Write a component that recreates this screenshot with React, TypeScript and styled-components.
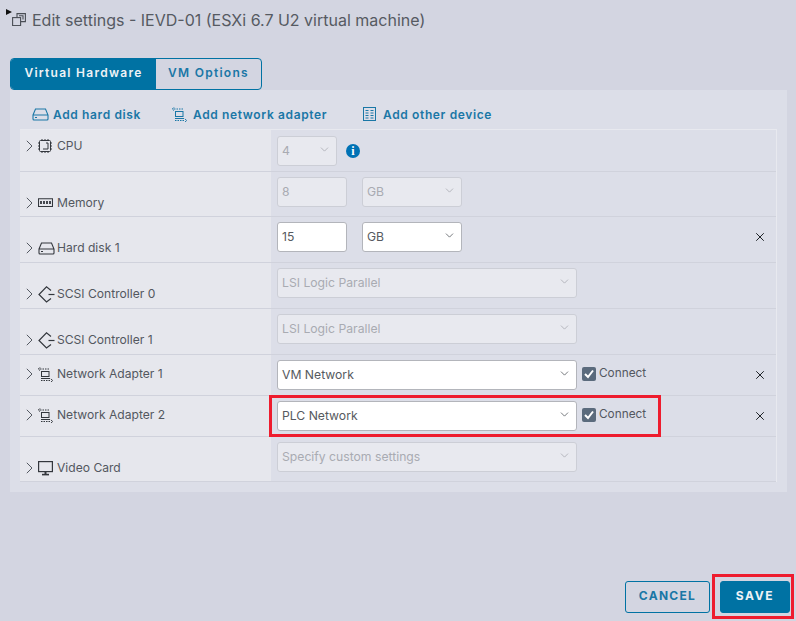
import React from "react";
import styled, { createGlobalStyle } from "styled-components";
import { ChevronDown, X } from "lucide-react";

const GlobalStyle = createGlobalStyle`
  html, body {
    margin: 0;
    padding: 0;
    background: #d3d5e1;
    overflow: hidden;
  }
  * {
    box-sizing: border-box;
  }
`;

const Dialog = styled.div`
  width: 796px;
  height: 621px;
  padding: 0 10px;
  display: flex;
  flex-direction: column;
  font-family: Inter, "Noto Sans", sans-serif;
  color: #484d55;
  position: relative;
`;

const Header = styled.div`
  height: 58px;
  padding: 10px 0 0 2px;
  display: flex;
  align-items: flex-start;
  gap: 6px;
  position: relative;
`;

const Caret = styled.div`
  position: absolute;
  left: -4px;
  top: 9px;
  border-left: 6px solid #111;
  border-top: 3px solid transparent;
  border-bottom: 3px solid transparent;
`;

const HeaderIcon = styled.span`
  display: flex;
  margin-top: 3px;
`;

const Title = styled.h1`
  margin: 0;
  font-size: 16px;
  font-weight: 400;
  line-height: 20px;
  color: #565a62;
`;

const Tabs = styled.div`
  display: flex;
  width: 252px;
  height: 32px;
  border: 1px solid #0072a3;
  border-radius: 4px;
  overflow: hidden;
`;

const Tab = styled.div<{ $active?: boolean }>`
  display: flex;
  align-items: center;
  justify-content: center;
  width: ${(p) => (p.$active ? "145px" : "105px")};
  padding-bottom: 3px;
  background: ${(p) => (p.$active ? "#0072a3" : "transparent")};
  color: ${(p) => (p.$active ? "#eef2f6" : "#1a77a6")};
  font-size: 12px;
  font-weight: 600;
  letter-spacing: 1.27px;
`;

const Panel = styled.div`
  width: 777px;
  height: 402px;
  flex-shrink: 0;
  background: #dcdee8;
  padding: 0 10px;
`;

const AddBar = styled.div`
  height: 40px;
  display: flex;
  align-items: center;
  padding-left: 12px;
  padding-top: 8px;
`;

const AddAction = styled.div<{ $width: number; $gap: number }>`
  display: flex;
  align-items: center;
  gap: ${(p) => p.$gap}px;
  width: ${(p) => p.$width}px;
  color: #1a77a6;
  font-size: 12px;
  font-weight: 600;
  letter-spacing: 0.63px;
`;

const Rows = styled.div`
  display: flex;
  flex-direction: column;
  border-right: 1px solid #e8e9ef;
  box-shadow: 0 -1px 0 #e8e9ef;
`;

const Row = styled.div<{ $height: number }>`
  display: flex;
  height: ${(p) => p.$height}px;
  border-bottom: 1px solid #d0d2dc;
`;

const LabelCell = styled.div<{ $top: number }>`
  width: 251px;
  height: 100%;
  background: #e6e7ed;
  display: flex;
  align-items: flex-start;
  padding: ${(p) => p.$top}px 0 0 6px;
  font-size: 12.1px;
  line-height: 16px;
  color: #53575f;
`;

const Expander = styled.span`
  width: 7px;
  height: 16px;
  margin-right: 5px;
  display: flex;
  align-items: center;
  color: #555a62;
`;

const RowIcon = styled.span`
  width: 19px;
  height: 16px;
  display: flex;
  align-items: center;
  justify-content: flex-start;
  color: #33373d;
`;

const ValueCell = styled.div<{ $top: number }>`
  flex: 1;
  display: flex;
  align-items: flex-start;
  gap: 5px;
  padding: ${(p) => p.$top}px 0 0 6px;
`;

const Field = styled.div<{ $width: number; $disabled?: boolean; $gap?: number }>`
  width: ${(p) => p.$width}px;
  height: 30px;
  margin-right: ${(p) => p.$gap ?? 0}px;
  padding: 0 5px 2px 4px;
  display: flex;
  align-items: center;
  justify-content: space-between;
  background: ${(p) => (p.$disabled ? "#e8e9ef" : "#ffffff")};
  border: 1px solid ${(p) => (p.$disabled ? "#ccced6" : "#b3b5bb")};
  border-radius: 3px;
  font-size: 12.2px;
  color: ${(p) => (p.$disabled ? "#a9abb2" : "#565a60")};

  svg {
    margin-top: -2px;
  }
`;

const Check = styled.span`
  width: 14px;
  height: 14px;
  margin-top: 7px;
  border-radius: 2px;
  background: #5b6b7d;
  display: flex;
  align-items: center;
  justify-content: center;
`;

const CheckLabel = styled.span`
  font-size: 11.8px;
  line-height: 16px;
  margin: 5px 0 0 -2px;
  color: #53575f;
`;

const InfoDot = styled.span`
  width: 14px;
  height: 14px;
  margin: 8px 0 0 4px;
  border-radius: 50%;
  background: #0072b5;
  color: #fff;
  font-family: "Liberation Serif", serif;
  font-size: 12px;
  font-weight: 700;
  line-height: 14px;
  text-align: center;
`;

const Remove = styled.span`
  margin: 8px 9px 0 auto;
  display: flex;
  color: #1c2025;
`;

const Highlight = styled.div`
  position: absolute;
  left: 269px;
  top: 395px;
  width: 392px;
  height: 42px;
  border: 3px solid #ee1c2e;
  pointer-events: none;
`;

const Footer = styled.div`
  flex: 1;
  display: flex;
  justify-content: flex-end;
  align-items: flex-end;
  gap: 10px;
  padding: 0 0 8px 0;
  margin-right: -4px;
`;

const Button = styled.div<{ $primary?: boolean }>`
  width: ${(p) => (p.$primary ? "70px" : "85px")};
  height: 32px;
  padding-bottom: 3px;
  display: flex;
  align-items: center;
  justify-content: center;
  border-radius: 3px;
  border: 1px solid #0072a3;
  background: ${(p) => (p.$primary ? "#0072a3" : "transparent")};
  color: ${(p) => (p.$primary ? "#eef2f6" : "#1a77a6")};
  font-size: 12px;
  font-weight: 700;
  letter-spacing: ${(p) => (p.$primary ? "1.7px" : "1.3px")};
`;

const SaveOutline = styled.div`
  position: absolute;
  left: 712px;
  top: 574px;
  width: 82px;
  height: 45px;
  border: 3px solid #ee1c2e;
  pointer-events: none;
`;

const DiskIcon = () => (
  <svg width="17" height="13" viewBox="0 0 17 13" fill="none" stroke="currentColor" strokeWidth="1.1">
    <path d="M1 7 L3.5 1 H13.5 L16 7 V11 Q16 12 15 12 H2 Q1 12 1 11 Z M1 7 H16" />
    <path d="M3 9.5 H5" />
  </svg>
);

const CpuIcon = () => (
  <svg width="14" height="14" viewBox="0 0 14 14" fill="none" stroke="currentColor" strokeWidth="1">
    <rect x="1.5" y="1.5" width="11" height="11" rx="1" />
    <path d="M4 0 V1.5 M7 0 V1.5 M10 0 V1.5 M4 12.5 V14 M7 12.5 V14 M10 12.5 V14 M0 4 H1.5 M0 7 H1.5 M0 10 H1.5 M12.5 4 H14 M12.5 7 H14 M12.5 10 H14" />
    <path d="M8 4 H10 V10 H5" />
  </svg>
);

const MemoryIcon = () => (
  <svg width="15" height="10" viewBox="0 0 15 10" fill="none" stroke="currentColor" strokeWidth="1.1">
    <path d="M.5 .8 H14.5 V8.5 H.5 Z" />
    <path d="M3 3 V6 M6 3 V6 M9 3 V6 M12 3 V6" strokeWidth="1.8" />
  </svg>
);

const ScsiIcon = () => (
  <svg width="17" height="17" viewBox="0 0 17 17" fill="none" stroke="currentColor" strokeWidth="1.2">
    <path d="M13 4.5 L8.5 .9 L1 8.5 L8.5 16 L13 12.5" />
    <path d="M10.5 8.5 H16.5" />
  </svg>
);

const NetworkIcon = () => (
  <svg width="15" height="15" viewBox="0 0 15 15" fill="none" stroke="currentColor" strokeWidth="1">
    <rect x="3.5" y="4.5" width="7.5" height="5" />
    <path d="M3 11.5 H12" />
    <path d="M2 2 H12 M3 13.5 H13" strokeDasharray="1.5 1" />
    <path d="M2 .4 L.4 2 L2 3.6 M13 11.9 L14.6 13.5 L13 15.1" />
  </svg>
);

const DeviceIcon = () => (
  <svg width="13" height="14" viewBox="0 0 13 14" fill="none" stroke="currentColor" strokeWidth="1">
    <rect x=".5" y=".5" width="12" height="13" />
    <path d="M2.5 3.5 H5.5 M7.5 3.5 H10.5 M2.5 6 H5.5 M7.5 6 H10.5 M2.5 8.5 H5.5 M7.5 8.5 H10.5 M2.5 11 H5.5 M7.5 11 H10.5" />
  </svg>
);

const MonitorIcon = () => (
  <svg width="15" height="15" viewBox="0 0 15 15" fill="none" stroke="currentColor" strokeWidth="1.2">
    <rect x=".6" y=".6" width="13.8" height="10" />
    <path d="M4 13.6 H11" strokeWidth="1.6" />
    <path d="M7.5 11 V13" strokeWidth="2" />
  </svg>
);

const WindowsIcon = () => (
  <svg width="14" height="13" viewBox="0 0 14 13" fill="none" stroke="#4a4e55" strokeWidth="1.1">
    <rect x=".6" y="4.6" width="8" height="8" />
    <path d="M5 4.5 V.6 H13.4 V8.6 H8.6" />
    <path d="M7 2.8 H11 V6.5" />
  </svg>
);

const ExpandGlyph = () => (
  <svg width="7" height="12" viewBox="0 0 7 12" fill="none" stroke="currentColor" strokeWidth="1">
    <path d="M.8 .8 L6 6 L.8 11.2" />
  </svg>
);

const Chevron = ({ disabled }: { disabled?: boolean }) => (
  <ChevronDown size={13} strokeWidth={1.4} color={disabled ? "#a5a7ae" : "#4c5056"} />
);

const Tick = () => (
  <svg width="12" height="12" viewBox="0 0 12 12" fill="none" stroke="#fff" strokeWidth="2">
    <path d="M2 6 L5 9 L10 2.5" />
  </svg>
);

const RemoveButton = () => (
  <Remove>
    <X size={14} strokeWidth={1.7} />
  </Remove>
);

const Connect = () => (
  <>
    <Check>
      <Tick />
    </Check>
    <CheckLabel>Connect</CheckLabel>
  </>
);

type RowData = {
  label: string;
  icon: React.ReactNode;
  height: number;
  labelTop: number;
  valueTop: number;
  content: React.ReactNode;
};

const rows: RowData[] = [
  {
    label: "CPU",
    icon: <CpuIcon />,
    height: 42,
    labelTop: 8,
    valueTop: 6,
    content: (
      <>
        <Field $width={60} $disabled>
          4 <Chevron disabled />
        </Field>
        <InfoDot>i</InfoDot>
      </>
    ),
  },
  {
    label: "Memory",
    icon: <MemoryIcon />,
    height: 45,
    labelTop: 23,
    valueTop: 5,
    content: (
      <>
        <Field $width={70} $disabled $gap={10}>
          8
        </Field>
        <Field $width={100} $disabled>
          GB <Chevron disabled />
        </Field>
      </>
    ),
  },
  {
    label: "Hard disk 1",
    icon: <DiskIcon />,
    height: 46,
    labelTop: 23,
    valueTop: 5,
    content: (
      <>
        <Field $width={70} $gap={10}>
          15
        </Field>
        <Field $width={100}>
          GB <Chevron />
        </Field>
        <RemoveButton />
      </>
    ),
  },
  {
    label: "SCSI Controller 0",
    icon: <ScsiIcon />,
    height: 46,
    labelTop: 23,
    valueTop: 5,
    content: (
      <Field $width={300} $disabled>
        LSI Logic Parallel <Chevron disabled />
      </Field>
    ),
  },
  {
    label: "SCSI Controller 1",
    icon: <ScsiIcon />,
    height: 46,
    labelTop: 23,
    valueTop: 5,
    content: (
      <Field $width={300} $disabled>
        LSI Logic Parallel <Chevron disabled />
      </Field>
    ),
  },
  {
    label: "Network Adapter 1",
    icon: <NetworkIcon />,
    height: 41,
    labelTop: 11,
    valueTop: 5,
    content: (
      <>
        <Field $width={300}>
          VM Network <Chevron />
        </Field>
        <Connect />
        <RemoveButton />
      </>
    ),
  },
  {
    label: "Network Adapter 2",
    icon: <NetworkIcon />,
    height: 41,
    labelTop: 11,
    valueTop: 5,
    content: (
      <>
        <Field $width={300}>
          PLC Network <Chevron />
        </Field>
        <Connect />
        <RemoveButton />
      </>
    ),
  },
  {
    label: "Video Card",
    icon: <MonitorIcon />,
    height: 45,
    labelTop: 23,
    valueTop: 5,
    content: (
      <Field $width={300} $disabled>
        Specify custom settings <Chevron disabled />
      </Field>
    ),
  },
];

export default function App() {
  return (
    <Dialog>
      <GlobalStyle />
      <Header>
        <Caret />
        <HeaderIcon>
          <WindowsIcon />
        </HeaderIcon>
        <Title>Edit settings - IEVD-01 (ESXi 6.7 U2 virtual machine)</Title>
      </Header>

      <Tabs>
        <Tab $active>Virtual Hardware</Tab>
        <Tab>VM Options</Tab>
      </Tabs>

      <Panel>
        <AddBar>
          <AddAction $width={140} $gap={4}>
            <DiskIcon /> Add hard disk
          </AddAction>
          <AddAction $width={191} $gap={6}>
            <NetworkIcon /> Add network adapter
          </AddAction>
          <AddAction $width={160} $gap={7}>
            <DeviceIcon /> Add other device
          </AddAction>
        </AddBar>

        <Rows>
          {rows.map((row) => (
            <Row key={row.label} $height={row.height}>
              <LabelCell $top={row.labelTop}>
                <Expander>
                  <ExpandGlyph />
                </Expander>
                <RowIcon>{row.icon}</RowIcon>
                {row.label}
              </LabelCell>
              <ValueCell $top={row.valueTop}>{row.content}</ValueCell>
            </Row>
          ))}
        </Rows>
      </Panel>

      <Footer>
        <Button>CANCEL</Button>
        <Button $primary>SAVE</Button>
      </Footer>

      <Highlight />
      <SaveOutline />
    </Dialog>
  );
}
